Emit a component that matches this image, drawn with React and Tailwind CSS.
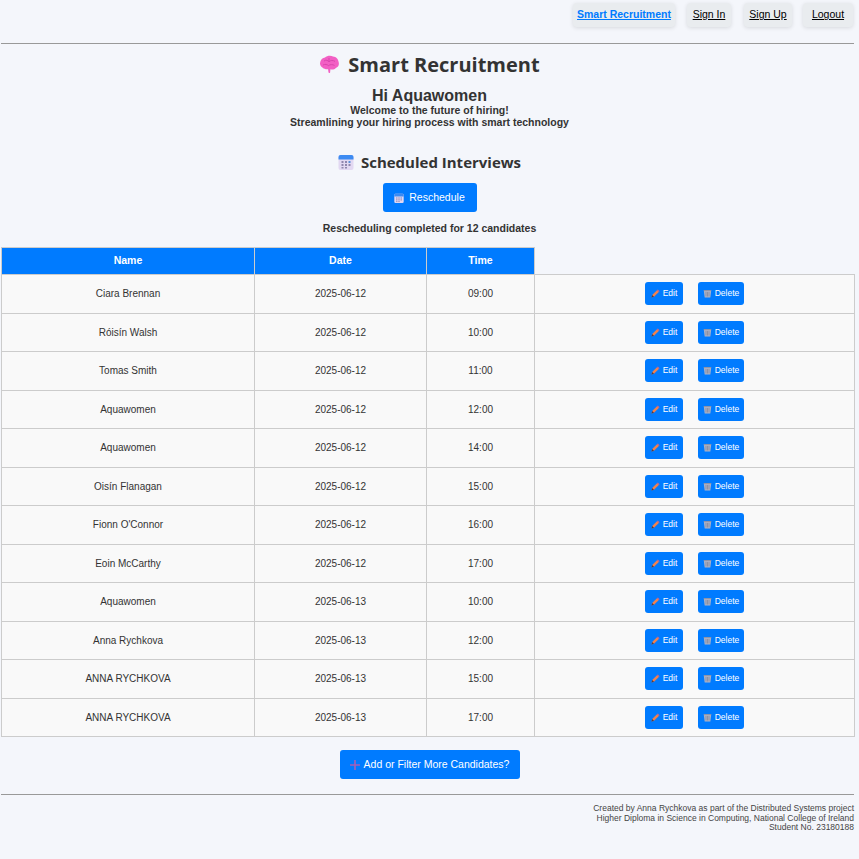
import React from "react";

const rows = [
  ["Ciara Brennan", "2025-06-12", "09:00"],
  ["Róisín Walsh", "2025-06-12", "10:00"],
  ["Tomas Smith", "2025-06-12", "11:00"],
  ["Aquawomen", "2025-06-12", "12:00"],
  ["Aquawomen", "2025-06-12", "14:00"],
  ["Oisín Flanagan", "2025-06-12", "15:00"],
  ["Fionn O'Connor", "2025-06-12", "16:00"],
  ["Eoin McCarthy", "2025-06-12", "17:00"],
  ["Aquawomen", "2025-06-13", "10:00"],
  ["Anna Rychkova", "2025-06-13", "12:00"],
  ["ANNA RYCHKOVA", "2025-06-13", "15:00"],
  ["ANNA RYCHKOVA", "2025-06-13", "17:00"],
];

const Brain = () => (
  <svg width="21" height="20" viewBox="0 0 21 20" className="shrink-0">
    <path d="M6 2.5C8 .6 12 .4 14 1.6c3 .3 5.4 2.6 5.6 5.4.9 2.6-.3 5.2-2.8 6-1.3 1.5-3.6 1.8-5.4 1.2l-.3 3.2c-.2.8-1.2.8-1.6.2l-.4-3.4c-2 .3-4-.2-5.4-1.4C1.2 11.400.400 8.600 1.400 6.400 2 4.400 3.800 2.800 6 2.500Z" fill="#f25fc4" />
    <path d="M5 6c2-1.500 4-.5 5 .8 1.500-1.600 4-1.800 6-.4M4 10c2-1 4-.6 5.500.6 1.500-1.200 4-1.300 6-.2M10 3v4" stroke="#d945ad" strokeWidth="1" fill="none" />
  </svg>
);

const Calendar = ({ size = 16 }) => (
  <svg width={size} height={size} viewBox="0 0 16 16" className="shrink-0">
    <rect x="0.500" y="1" width="15" height="15" rx="2" fill="#e2d8f2" />
    <path d="M.5 3a2 2 0 0 1 2-2h11a2 2 0 0 1 2 2v2.500H.5Z" fill="#3d8bf2" />
    <g fill="#8f86ad">
      <rect x="3.500" y="7" width="2" height="2" />
      <rect x="7" y="7" width="2" height="2" />
      <rect x="10.500" y="7" width="2" height="2" fill="#5b8fd9" />
      <rect x="3.500" y="10" width="2" height="2" />
      <rect x="7" y="10" width="2" height="2" />
      <rect x="10.500" y="10" width="2" height="2" />
      <rect x="3.500" y="13" width="2" height="1.500" />
      <rect x="7" y="13" width="2" height="1.500" />
    </g>
  </svg>
);

const Pencil = () => (
  <svg width="9" height="9" viewBox="0 0 9 9" className="shrink-0">
    <path d="M.5 8.500 1.200 6 6 1.200 7.800 3 3 7.800Z" fill="#f0824f" />
    <path d="M6 1.200 6.800.5 8.500 2.200 7.800 3Z" fill="#e8607a" />
    <path d="M.5 8.500 1.200 6 3 7.800Z" fill="#4a3a46" />
  </svg>
);

const Trash = () => (
  <svg width="9" height="9" viewBox="0 0 9 9" className="shrink-0">
    <path d="M.8 1.500h7.400L7.300 8.500H1.700Z" fill="#aeb4c8" />
    <path d="M.8 1h7.400v1.200H.8Z" fill="#8f94a8" />
    <path d="M3 3v4.500M4.500 3v4.500M6 3v4.500" stroke="#7d8296" strokeWidth=".7" />
  </svg>
);

const Plus = () => (
  <svg width="10" height="10" viewBox="0 0 10 10" className="shrink-0">
    <path d="M4.200 0h1.600v4.200H10v1.600H5.800V10H4.200V5.800H0V4.200h4.200Z" fill="#a55fb8" />
  </svg>
);

const NavLink = ({ children, active, wide }) => (
  <a
    href="#"
    className={`flex h-[24px] items-center justify-center rounded-[4px] bg-[#e9ecef] text-[10.5px] underline shadow-[0_1px_4px_rgba(0,0,0,0.12)] ${wide} ${
      active ? "font-bold text-[#007bff]" : "text-black"
    }`}
  >
    {children}
  </a>
);

const RowButton = ({ icon, label, wide }) => (
  <button className={`flex h-[23px] items-center justify-center gap-[3px] rounded-[3px] bg-[#007bff] text-[8.500px] text-white ${wide}`}>
    {icon}
    {label}
  </button>
);

export default function App() {
  return (
    <div className="min-h-[859px] bg-[#f4f6fb] font-['Liberation_Sans',Arial,sans-serif] text-[#333]">
      <nav className="flex justify-end pt-[3px] pr-[6px]">
        <div className="mr-[12px]"><NavLink active wide="w-[102px]">Smart Recruitment</NavLink></div>
        <div className="mr-[13px]"><NavLink wide="w-[44px]">Sign In</NavLink></div>
        <div className="mr-[11px]"><NavLink wide="w-[48px]">Sign Up</NavLink></div>
        <NavLink wide="w-[50px]">Logout</NavLink>
      </nav>

      <hr className="mt-[16px] ml-[1px] w-[853px] border-t border-[#999]" />

      <header className="flex flex-col items-center">
        <h1 className="mt-[6px] flex h-[30px] items-center gap-[8px] font-['Open_Sans',sans-serif] text-[20px] font-bold text-[#333]">
          <Brain />
          Smart Recruitment
        </h1>
        <p className="mt-[7px] text-[16px] leading-[18px] font-bold">Hi Aquawomen</p>
        <p className="text-center text-[10.500px] leading-[11px] font-bold">Welcome to the future of hiring!</p>
        <p className="text-center text-[10.500px] leading-[12px] font-bold">Streamlining your hiring process with smart technology</p>
        <h2 className="mt-[22px] flex h-[24px] items-center gap-[7px] font-['Open_Sans',sans-serif] text-[15px] font-bold text-[#333]">
          <Calendar />
          Scheduled Interviews
        </h2>
        <button className="mt-[9px] flex h-[29px] w-[94px] items-center justify-center gap-[5px] rounded-[3px] bg-[#007bff] text-[10.500px] text-white">
          <Calendar size={10} />
          Reschedule
        </button>
        <p className="mt-[10px] text-[10.500px] leading-[12px] font-bold">Rescheduling completed for 12 candidates</p>
      </header>

      <table className="mt-[13px] ml-[1px] w-[853px] table-fixed border-collapse text-[10px] text-[#333]">
        <colgroup>
          <col className="w-[253px]" />
          <col className="w-[172px]" />
          <col className="w-[108px]" />
          <col className="w-[320px]" />
        </colgroup>
        <thead>
          <tr className="h-[27px]">
            <th className="border border-[#ccc] bg-[#007bff] text-[10.500px] font-bold text-white">Name</th>
            <th className="border border-[#ccc] bg-[#007bff] text-[10.500px] font-bold text-white">Date</th>
            <th className="border border-[#ccc] bg-[#007bff] text-[10.500px] font-bold text-white">Time</th>
            <th className="p-0" />
          </tr>
        </thead>
        <tbody>
          {rows.map(([name, date, time], i) => (
            <tr key={i} className="h-[38.500px] bg-[#f9f9f9]">
              <td className="border border-[#ccc] text-center">{name}</td>
              <td className="border border-[#ccc] text-center">{date}</td>
              <td className="border border-[#ccc] text-center">{time}</td>
              <td className="border border-[#ccc]">
                <div className="flex justify-center gap-[15px] pl-[0px]">
                  <RowButton icon={<Pencil />} label="Edit" wide="w-[38px]" />
                  <RowButton icon={<Trash />} label="Delete" wide="w-[46px]" />
                </div>
              </td>
            </tr>
          ))}
        </tbody>
      </table>

      <div className="mt-[13px] flex justify-center">
        <button className="flex h-[29px] w-[180px] items-center justify-center gap-[4px] rounded-[3px] bg-[#007bff] text-[10.500px] font-medium text-white">
          <Plus />
          Add or Filter More Candidates?
        </button>
      </div>

      <hr className="mt-[15px] ml-[1px] w-[853px] border-t border-[#999]" />

      <footer className="mt-[9px] pr-[5px] text-right text-[8.500px] leading-[9.500px] text-[#444]">
        <p>Created by Anna Rychkova as part of the Distributed Systems project</p>
        <p>Higher Diploma in Science in Computing, National College of Ireland</p>
        <p>Student No. 23180188</p>
      </footer>
    </div>
  );
}
